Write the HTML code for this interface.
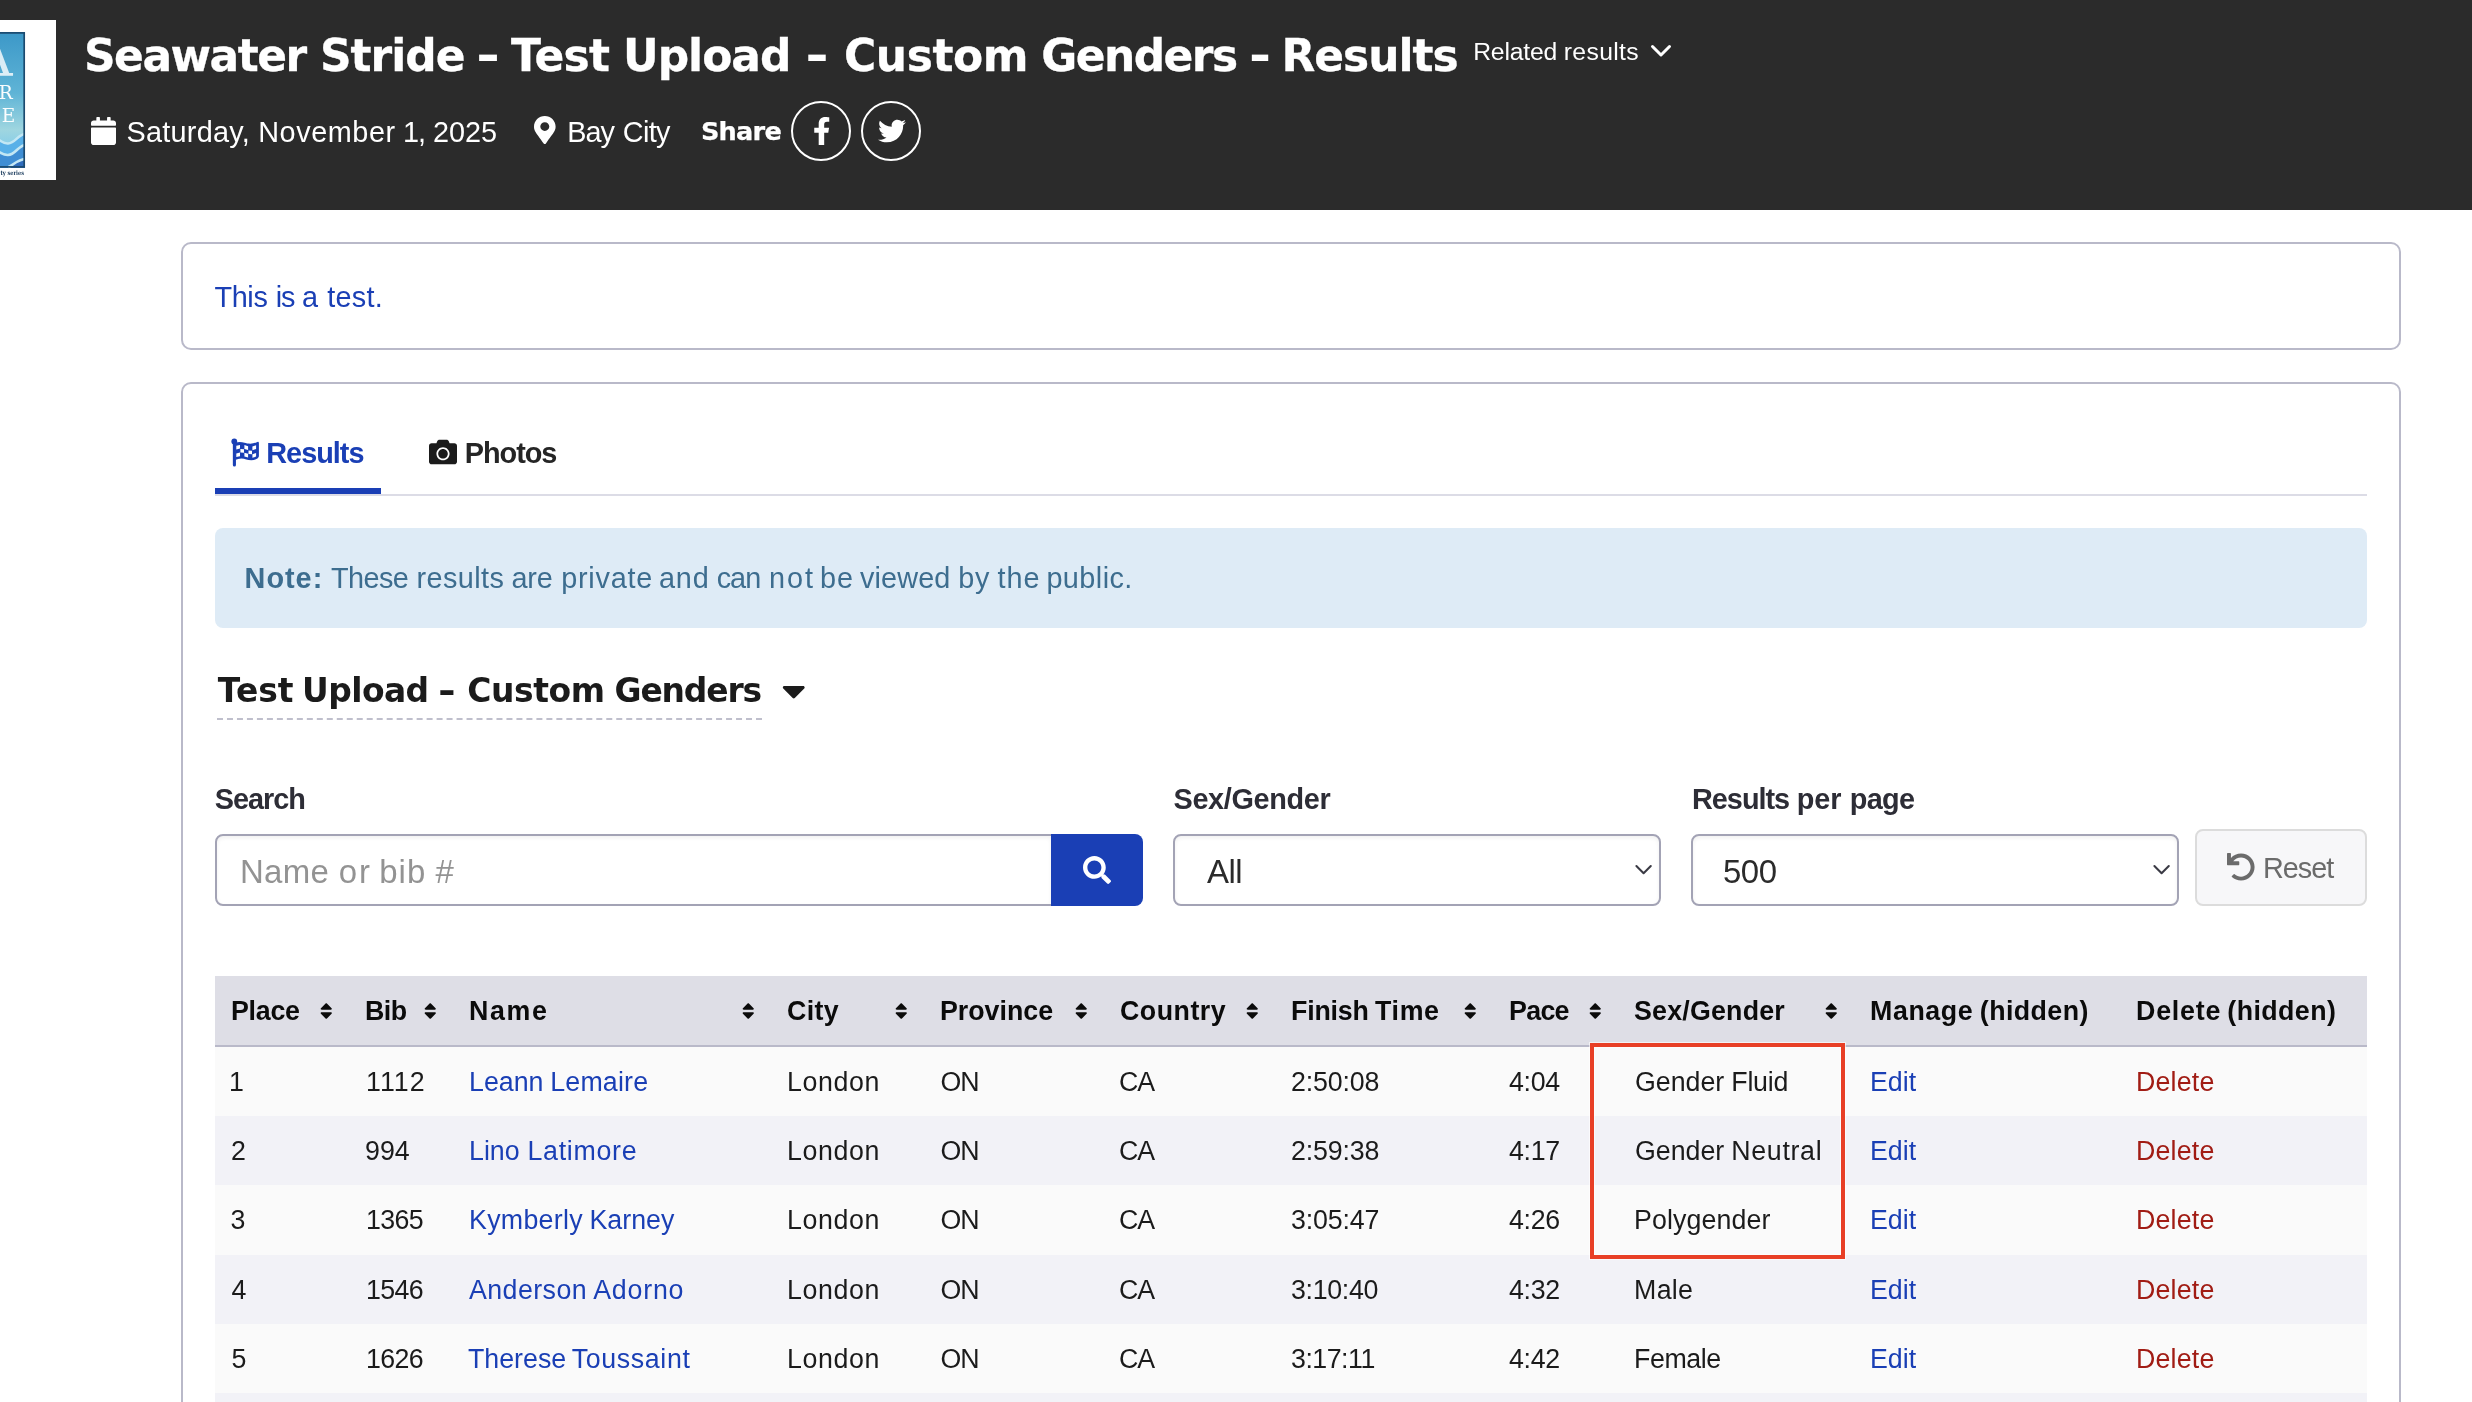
<!DOCTYPE html>
<html lang="en">
<head>
<meta charset="utf-8">
<title>Seawater Stride - Test Upload - Custom Genders - Results</title>
<style>
*{box-sizing:border-box;margin:0;padding:0}
html,body{width:2472px;height:1402px;overflow:hidden;background:#fff}
body{position:relative;font-family:"Liberation Sans",sans-serif;font-size:28px;line-height:1;color:#1b1b1b;will-change:transform}
.abs{position:absolute;white-space:nowrap;line-height:1}
.ws{font-family:"DejaVu Sans",sans-serif;font-weight:700}
.b{font-weight:700}
h1{font-size:inherit;font-weight:inherit}
.hd{position:absolute;left:0;top:0;width:2472px;height:210px;background:#2b2b2b}
.logo{position:absolute;left:0;top:20px;width:56px;height:160px;background:#fff;overflow:hidden}
.lgbg{position:absolute;left:0;top:12px;width:25px;height:136px;background:linear-gradient(180deg,#3c98c8 0%,#5fb4d6 45%,#9fd6e0 72%,#8fd0e6 80%)}
.circ{position:absolute;width:60px;height:60px;border:2px solid #fff;border-radius:50%}
.card{position:absolute;left:181px;width:2220px;border:2px solid #b9b9c9;border-radius:10px;background:#fff}
.alert{position:absolute;left:215px;top:528px;width:2152px;height:100px;background:#deebf6;border-radius:8px}
.inp{position:absolute;top:834px;height:72px;border:2px solid #a3a3b5;background:#fff;border-radius:8px;box-shadow:inset 0 2px 4px rgba(0,0,0,.06)}
.th{position:absolute;left:215px;top:976px;width:2152px;height:71px;background:#dedee6;border-bottom:2px solid #b9b9c9}
.tr{position:absolute;left:215px;width:2152px}
</style>
</head>
<body>
<div class="hd"></div>
<div class="logo"><div class="lgbg"></div><svg class="abs" style="left:0;top:0" width="27" height="160" viewBox="0 0 27 160"><path d="M-12 113C-6 113 0 124 8 123.5S18 113.5 27 113.5V148H-12Z" fill="#58b0e8"/><path d="M-12 126C-6 126 0 135.5 8 135S18 125 27 124.5V148H-12Z" fill="#3f8ed4"/><path d="M6 148C11 148 15 140 27 138.5V148Z" fill="#2f6dbd"/><path d="M-12 113C-6 113 0 124 8 123.5S18 113.5 27 113.5M-12 126C-6 126 0 135.5 8 135S18 125 27 124.5M8 147C12 147 15 140 27 138.5" fill="none" stroke="#c3e7f4" stroke-width="2.6"/><g fill="#fff" font-family="DejaVu Serif,Liberation Serif,serif" fill-opacity=".96"><text x="-7" y="56" font-size="54" text-anchor="middle" fill-opacity=".8">A</text><text x="-1.3" y="79.3" font-size="18.5">R</text><text x="1.7" y="102.4" font-size="18.5">E</text></g><rect x="25" y="0" width="3" height="160" fill="#fff"/><rect x="-5" y="12.9" width="29.2" height="134" fill="none" stroke="#1b4a6f" stroke-width="1.7"/><text x="0.5" y="154.8" font-size="6.2" font-weight="700" font-family="DejaVu Serif,Liberation Serif,serif" fill="#17385a" textLength="23.5" lengthAdjust="spacingAndGlyphs">ty series</text></svg></div>
<h1><span class="abs ws" style="left:84px;top:34px;font-size:43.92px;letter-spacing:-1.5px;color:#fff;-webkit-text-stroke:.3px #fff;">Seawater</span> <span class="abs ws" style="left:320px;top:34px;font-size:43.92px;letter-spacing:-1px;color:#fff;-webkit-text-stroke:.3px #fff;">Stride</span> <span class="abs ws" style="left:479.2px;top:34px;font-size:43.92px;color:#fff;transform:scaleX(1.32);">-</span> <span class="abs ws" style="left:511px;top:34px;font-size:43.92px;letter-spacing:-0.67px;color:#fff;-webkit-text-stroke:.3px #fff;">Test</span> <span class="abs ws" style="left:623px;top:34px;font-size:43.92px;letter-spacing:-1px;color:#fff;-webkit-text-stroke:.3px #fff;">Upload</span> <span class="abs ws" style="left:808px;top:34px;font-size:43.92px;color:#fff;transform:scaleX(1.29);">-</span> <span class="abs ws" style="left:844px;top:34px;font-size:43.92px;letter-spacing:-0.4px;color:#fff;-webkit-text-stroke:.3px #fff;">Custom</span> <span class="abs ws" style="left:1041.3px;top:34px;font-size:43.92px;letter-spacing:-1.55px;color:#fff;-webkit-text-stroke:.3px #fff;">Genders</span> <span class="abs ws" style="left:1251px;top:34px;font-size:43.92px;color:#fff;transform:scaleX(1.21);">-</span> <span class="abs ws" style="left:1281.5px;top:34px;font-size:43.92px;letter-spacing:-1px;color:#fff;-webkit-text-stroke:.3px #fff;">Results</span></h1>
<div class="abs" style="left:0;top:40px;font-size:24.72px;color:#fff;"><span class="abs" style="left:1473.2px;letter-spacing:-0.17px">Related </span><span class="abs" style="left:1563.8px;letter-spacing:0.33px">results</span></div>
<svg class="abs" style="left:1649px;top:42px" width="24" height="20" viewBox="0 0 24 20"><path d="M3.5 4.5L12 13l8.5-8.5" fill="none" stroke="#fff" stroke-width="3" stroke-linecap="round" stroke-linejoin="round"/></svg>
<svg class="abs" style="left:91px;top:116.6px" width="25" height="28" viewBox="0 0 448 512" preserveAspectRatio="none" ><path fill="#fff" d="M12 192h424c6.6 0 12 5.4 12 12v260c0 26.5-21.5 48-48 48H48c-26.5 0-48-21.5-48-48V204c0-6.6 5.4-12 12-12zm436-44v-36c0-26.5-21.5-48-48-48h-48V12c0-6.6-5.4-12-12-12h-40c-6.6 0-12 5.4-12 12v52H160V12c0-6.6-5.4-12-12-12h-40c-6.6 0-12 5.4-12 12v52H48C21.5 64 0 85.5 0 112v36c0 6.6 5.4 12 12 12h424c6.6 0 12-5.4 12-12z"/></svg>
<div class="abs" style="left:0;top:118px;font-size:28.84px;color:#fff;"><span class="abs" style="left:126.5px;letter-spacing:0.25px">Saturday, </span><span class="abs" style="left:258.2px;letter-spacing:0.57px">November </span><span class="abs" style="left:402.9px;letter-spacing:-1px">1, </span><span class="abs" style="left:432.9px;letter-spacing:0px">2025</span></div>
<svg class="abs" style="left:534px;top:116.4px" width="21.6" height="28" viewBox="0 0 384 512" preserveAspectRatio="none" ><path fill="#fff" d="M172.268 501.67C26.97 291.031 0 269.413 0 192 0 85.961 85.961 0 192 0s192 85.961 192 192c0 77.413-26.97 99.031-172.268 309.67-9.535 13.774-29.93 13.773-39.464 0zM192 272c44.183 0 80-35.817 80-80s-35.817-80-80-80-80 35.817-80 80 35.817 80 80 80z"/></svg>
<div class="abs" style="left:0;top:118px;font-size:28.84px;color:#fff;"><span class="abs" style="left:567.3px;letter-spacing:-1px">Bay </span><span class="abs" style="left:622.8px;letter-spacing:-0.67px">City</span></div>
<div class="abs ws" style="left:700.9px;top:119px;font-size:25.62px;letter-spacing:-0.75px;color:#fff;-webkit-text-stroke:.25px #fff;">Share</div>
<div class="circ" style="left:791px;top:100.5px"></div>
<svg class="abs" style="left:812.7px;top:116.5px" width="17.5" height="28" viewBox="0 0 320 512" preserveAspectRatio="none" ><path fill="#fff" d="M279.14 288l14.22-92.66h-88.91v-60.13c0-25.35 12.42-50.06 52.24-50.06h40.42V6.26S260.43 0 225.36 0c-73.22 0-121.08 44.38-121.08 124.72v70.62H22.89V288h81.39v224h100.17V288z"/></svg>
<div class="circ" style="left:861px;top:100.5px"></div>
<svg class="abs" style="left:877.5px;top:116.5px" width="28" height="28" viewBox="0 0 512 512" preserveAspectRatio="none" ><path fill="#fff" d="M459.37 151.716c.325 4.548.325 9.097.325 13.645 0 138.72-105.583 298.558-298.558 298.558-59.452 0-114.68-17.219-161.137-47.106 8.447.974 16.568 1.299 25.34 1.299 49.055 0 94.213-16.568 130.274-44.832-46.132-.975-84.792-31.188-98.112-72.772 6.498.974 12.995 1.624 19.818 1.624 9.421 0 18.843-1.3 27.614-3.573-48.081-9.747-84.143-51.98-84.143-102.985v-1.299c13.969 7.797 30.214 12.67 47.431 13.319-28.264-18.843-46.781-51.005-46.781-87.391 0-19.492 5.197-37.36 14.294-52.954 51.655 63.675 129.3 105.258 216.365 109.807-1.624-7.797-2.599-15.918-2.599-24.04 0-57.828 46.782-104.934 104.934-104.934 30.213 0 57.502 12.67 76.67 33.137 23.715-4.548 46.456-13.32 66.599-25.34-7.798 24.366-24.366 44.833-46.132 57.827 21.117-2.273 41.584-8.122 60.426-16.243-14.292 20.791-32.161 39.308-52.628 54.253z"/></svg>
<div class="card" style="top:242px;height:108px"></div>
<div class="abs" style="left:0;top:283px;font-size:28.84px;color:#1a3fb5;"><span class="abs" style="left:214.4px;letter-spacing:-0.33px">This </span><span class="abs" style="left:275.7px;letter-spacing:-1px">is </span><span class="abs" style="left:301.9px;letter-spacing:0px">a </span><span class="abs" style="left:327.2px;letter-spacing:0.25px">test.</span></div>
<div class="card" style="top:382px;height:1100px"></div>
<svg class="abs" style="left:228px;top:434px" width="36" height="36" viewBox="0 0 36 36"><g fill="#1a3fb5"><circle cx="6.3" cy="7.4" r="2.9"/><rect x="4.85" y="7" width="3.1" height="25.6" rx="1.5"/><path d="M7.5 8.6C10.5 7.9 13.5 7.9 16.5 8.8S24.5 10.6 29.3 8Q30.9 7.4 30.9 9.2V22.3C30.9 24.3 27 26.3 23.3 26.3S17 24.4 13.3 24.4C11 24.4 9 25.2 7.5 25.8Z"/></g><path fill="#fff" d="M8.3 11.7L12 10.9V14.6L8.3 15.4ZM8.3 19.4L12 18.6V22.2L8.3 23ZM12.4 14.9L16 15.2V18.7L12.4 18.4ZM16.4 11.1L20.1 12.2V15.9L16.4 14.9ZM16.4 18.8L20.1 19.8V23.4L16.4 22.4ZM20.5 16.4L24 16.8V20.3L20.5 19.9ZM24.4 12.6L28.1 11.3V15L24.4 16.2ZM24.4 20.2L28.1 19V22.6L24.4 23.8Z"/></svg>
<div class="abs b" style="left:266.3px;top:439px;font-size:28.84px;letter-spacing:-1px;color:#1a3fb5;">Results</div>
<svg class="abs" style="left:429px;top:438px" width="28" height="28" viewBox="0 0 512 512" preserveAspectRatio="none" ><path fill="#1b1b1b" d="M512 144v288c0 26.5-21.5 48-48 48H48c-26.5 0-48-21.5-48-48V144c0-26.5 21.5-48 48-48h88l12.3-32.9c7-18.7 24.9-31.1 44.9-31.1h125.5c20 0 37.9 12.4 44.9 31.1L376 96h88c26.5 0 48 21.5 48 48zM376 288c0-66.2-53.8-120-120-120s-120 53.8-120 120 53.8 120 120 120 120-53.8 120-120zm-32 0c0 48.5-39.5 88-88 88s-88-39.5-88-88 39.5-88 88-88 88 39.5 88 88z"/></svg>
<div class="abs b" style="left:464.7px;top:439px;font-size:28.84px;letter-spacing:-1px;color:#252525;">Photos</div>
<div class="abs" style="left:215px;top:494px;width:2152px;height:2px;background:#dcdce6"></div>
<div class="abs" style="left:215px;top:488px;width:166px;height:6px;background:#1a3fb5"></div>
<div class="alert"></div>
<div class="abs b" style="left:244.6px;top:564px;font-size:28.84px;letter-spacing:1px;color:#3d6d8f;">Note:</div>
<div class="abs" style="left:0;top:564px;font-size:28.84px;color:#3d6d8f;"><span class="abs" style="left:331.1px;letter-spacing:-0.58px">These </span><span class="abs" style="left:416.4px;letter-spacing:0.44px">results </span><span class="abs" style="left:511.4px;letter-spacing:-0.08px">are </span><span class="abs" style="left:561.2px;letter-spacing:0.77px">private </span><span class="abs" style="left:658.9px;letter-spacing:0.9px">and </span><span class="abs" style="left:716.7px;letter-spacing:-1px">can </span><span class="abs" style="left:769px;letter-spacing:1.91px">not </span><span class="abs" style="left:820.1px;letter-spacing:0.88px">be </span><span class="abs" style="left:860px;letter-spacing:0.13px">viewed </span><span class="abs" style="left:958.2px;letter-spacing:0.88px">by </span><span class="abs" style="left:997.5px;letter-spacing:0.92px">the </span><span class="abs" style="left:1046.4px;letter-spacing:0.44px">public.</span></div>
<div class="abs ws" style="left:0;top:675px;font-size:32.94px;color:#1b1b1b;"><span class="abs" style="left:217.8px;letter-spacing:0px">Test </span><span class="abs" style="left:302.1px;letter-spacing:-0.6px">Upload </span><span class="abs" style="left:440.4px;transform:scaleX(1.3)">- </span><span class="abs" style="left:467.2px;letter-spacing:-0.4px">Custom </span><span class="abs" style="left:614.6px;letter-spacing:-1.17px">Genders</span></div>
<div class="abs" style="left:217px;top:718px;width:545px;height:0;border-top:2px dashed #bfbfcc"></div>
<svg class="abs" style="left:781.7px;top:671.9px" width="23.5" height="37.6" viewBox="0 0 320 512" preserveAspectRatio="none" ><path fill="#1b1b1b" d="M31.3 192h257.3c17.8 0 26.7 21.5 14.1 34.1L174.1 354.8c-7.8 7.8-20.5 7.8-28.3 0L17.2 226.1C4.6 213.5 13.5 192 31.3 192z"/></svg>
<div class="abs b" style="left:214.7px;top:785px;font-size:28.84px;letter-spacing:-1px;color:#2d2d36;">Search</div>
<div class="abs b" style="left:1173.5px;top:785px;font-size:28.84px;letter-spacing:-0.33px;color:#2d2d36;">Sex/Gender</div>
<div class="abs b" style="left:0;top:785px;font-size:28.84px;color:#2d2d36;"><span class="abs" style="left:1692px;letter-spacing:-1px">Results </span><span class="abs" style="left:1796.7px;letter-spacing:0px">per </span><span class="abs" style="left:1849.7px;letter-spacing:-0.67px">page</span></div>
<div class="inp" style="left:215px;width:838px;border-radius:8px 0 0 8px"></div>
<div class="abs" style="left:0;top:856px;font-size:32.96px;color:#939393;"><span class="abs" style="left:239.9px;letter-spacing:0.33px">Name </span><span class="abs" style="left:338.7px;letter-spacing:2px">or </span><span class="abs" style="left:379.3px;letter-spacing:1px">bib </span><span class="abs" style="left:435.4px;letter-spacing:0px">#</span></div>
<div class="abs" style="left:1051px;top:834px;width:92px;height:72px;background:#1a3fb5;border-radius:0 8px 8px 0"></div>
<svg class="abs" style="left:1082.7px;top:856.2px" width="28" height="28" viewBox="0 0 512 512" preserveAspectRatio="none" ><path fill="#fff" d="M505 442.7L405.3 343c-4.5-4.5-10.6-7-17-7H372c27.6-35.3 44-79.7 44-128C416 93.1 322.9 0 208 0S0 93.1 0 208s93.1 208 208 208c48.3 0 92.7-16.4 128-44v16.3c0 6.4 2.5 12.5 7 17l99.7 99.7c9.4 9.4 24.6 9.4 33.9 0l28.3-28.3c9.4-9.4 9.4-24.6.1-34zM208 336c-70.7 0-128-57.2-128-128 0-70.7 57.2-128 128-128 70.7 0 128 57.2 128 128 0 70.7-57.2 128-128 128z"/></svg>
<div class="inp" style="left:1173px;width:488px"></div>
<div class="abs" style="left:1207px;top:856px;font-size:32.96px;letter-spacing:-0.5px;color:#2b2b2b;">All</div>
<svg class="abs" style="left:1634.05px;top:860.4px" width="19.2" height="19.2" viewBox="0 0 16 16"><path d="M2 5l6 6 6-6" fill="none" stroke="#3a3a44" stroke-width="1.7" stroke-linecap="round" stroke-linejoin="round"/></svg>
<div class="inp" style="left:1691px;width:488px"></div>
<div class="abs" style="left:1723px;top:856px;font-size:32.96px;letter-spacing:-0.5px;color:#2b2b2b;">500</div>
<svg class="abs" style="left:2152.05px;top:860.4px" width="19.2" height="19.2" viewBox="0 0 16 16"><path d="M2 5l6 6 6-6" fill="none" stroke="#3a3a44" stroke-width="1.7" stroke-linecap="round" stroke-linejoin="round"/></svg>
<div class="abs" style="left:2195px;top:829px;width:172px;height:77px;border:2px solid #dcdcdc;background:#f7f7f9;border-radius:8px"></div>
<svg class="abs" style="left:2227px;top:853px" width="28" height="28" viewBox="0 0 512 512" preserveAspectRatio="none" ><path fill="#6b6b6b" d="M212.333 224.333H12c-6.627 0-12-5.373-12-12V12C0 5.373 5.373 0 12 0h48c6.627 0 12 5.373 12 12v78.112C117.773 39.279 184.26 7.47 258.175 8.007c136.906.994 246.448 111.623 246.157 248.532C504.041 393.258 393.12 504 256.333 504c-64.089 0-122.496-24.313-166.51-64.215-5.099-4.622-5.334-12.554-.467-17.42l33.967-33.967c4.474-4.474 11.662-4.717 16.401-.525C170.76 415.336 211.58 432 256.333 432c97.268 0 176-78.716 176-176 0-97.267-78.716-176-176-176-58.496 0-110.28 28.476-142.274 72.333h98.274c6.627 0 12 5.373 12 12v48c0 6.627-5.373 12-12 12z"/></svg>
<div class="abs" style="left:2263px;top:854px;font-size:28.84px;letter-spacing:-1px;color:#6b6b6b;">Reset</div>
<div class="th"></div>
<div class="abs b" style="left:231px;top:997.5px;font-size:26.78px;letter-spacing:-0.25px;color:#0b0b0b;">Place</div>
<svg class="abs" style="left:320.2px;top:1001.2px" width="12.5" height="20" viewBox="0 0 320 512" preserveAspectRatio="none" ><path fill="#0b0b0b" d="M41 288h238c21.4 0 32.1 25.9 17 41L177 448c-9.4 9.4-24.6 9.4-33.9 0L24 329c-15.1-15.1-4.4-41 17-41zm255-105L177 64c-9.4-9.4-24.6-9.4-33.9 0L24 183c-15.1 15.1-4.4 41 17 41h238c21.4 0 32.1-25.9 17-41z"/></svg>
<div class="abs b" style="left:365px;top:997.5px;font-size:26.78px;letter-spacing:-0.5px;color:#0b0b0b;">Bib</div>
<svg class="abs" style="left:424.2px;top:1001.2px" width="12.5" height="20" viewBox="0 0 320 512" preserveAspectRatio="none" ><path fill="#0b0b0b" d="M41 288h238c21.4 0 32.1 25.9 17 41L177 448c-9.4 9.4-24.6 9.4-33.9 0L24 329c-15.1-15.1-4.4-41 17-41zm255-105L177 64c-9.4-9.4-24.6-9.4-33.9 0L24 183c-15.1 15.1-4.4 41 17 41h238c21.4 0 32.1-25.9 17-41z"/></svg>
<div class="abs b" style="left:469px;top:997.5px;font-size:26.78px;letter-spacing:1.67px;color:#0b0b0b;">Name</div>
<svg class="abs" style="left:742.2px;top:1001.2px" width="12.5" height="20" viewBox="0 0 320 512" preserveAspectRatio="none" ><path fill="#0b0b0b" d="M41 288h238c21.4 0 32.1 25.9 17 41L177 448c-9.4 9.4-24.6 9.4-33.9 0L24 329c-15.1-15.1-4.4-41 17-41zm255-105L177 64c-9.4-9.4-24.6-9.4-33.9 0L24 183c-15.1 15.1-4.4 41 17 41h238c21.4 0 32.1-25.9 17-41z"/></svg>
<div class="abs b" style="left:787px;top:997.5px;font-size:26.78px;letter-spacing:0.33px;color:#0b0b0b;">City</div>
<svg class="abs" style="left:895.2px;top:1001.2px" width="12.5" height="20" viewBox="0 0 320 512" preserveAspectRatio="none" ><path fill="#0b0b0b" d="M41 288h238c21.4 0 32.1 25.9 17 41L177 448c-9.4 9.4-24.6 9.4-33.9 0L24 329c-15.1-15.1-4.4-41 17-41zm255-105L177 64c-9.4-9.4-24.6-9.4-33.9 0L24 183c-15.1 15.1-4.4 41 17 41h238c21.4 0 32.1-25.9 17-41z"/></svg>
<div class="abs b" style="left:940px;top:997.5px;font-size:26.78px;color:#0b0b0b;">Province</div>
<svg class="abs" style="left:1075.2px;top:1001.2px" width="12.5" height="20" viewBox="0 0 320 512" preserveAspectRatio="none" ><path fill="#0b0b0b" d="M41 288h238c21.4 0 32.1 25.9 17 41L177 448c-9.4 9.4-24.6 9.4-33.9 0L24 329c-15.1-15.1-4.4-41 17-41zm255-105L177 64c-9.4-9.4-24.6-9.4-33.9 0L24 183c-15.1 15.1-4.4 41 17 41h238c21.4 0 32.1-25.9 17-41z"/></svg>
<div class="abs b" style="left:1120px;top:997.5px;font-size:26.78px;letter-spacing:0.5px;color:#0b0b0b;">Country</div>
<svg class="abs" style="left:1246.2px;top:1001.2px" width="12.5" height="20" viewBox="0 0 320 512" preserveAspectRatio="none" ><path fill="#0b0b0b" d="M41 288h238c21.4 0 32.1 25.9 17 41L177 448c-9.4 9.4-24.6 9.4-33.9 0L24 329c-15.1-15.1-4.4-41 17-41zm255-105L177 64c-9.4-9.4-24.6-9.4-33.9 0L24 183c-15.1 15.1-4.4 41 17 41h238c21.4 0 32.1-25.9 17-41z"/></svg>
<div class="abs b" style="left:0;top:997.5px;font-size:26.78px;color:#0b0b0b;"><span class="abs" style="left:1291px;letter-spacing:-0.2px">Finish </span><span class="abs" style="left:1375px;letter-spacing:0.67px">Time</span></div>
<svg class="abs" style="left:1464.2px;top:1001.2px" width="12.5" height="20" viewBox="0 0 320 512" preserveAspectRatio="none" ><path fill="#0b0b0b" d="M41 288h238c21.4 0 32.1 25.9 17 41L177 448c-9.4 9.4-24.6 9.4-33.9 0L24 329c-15.1-15.1-4.4-41 17-41zm255-105L177 64c-9.4-9.4-24.6-9.4-33.9 0L24 183c-15.1 15.1-4.4 41 17 41h238c21.4 0 32.1-25.9 17-41z"/></svg>
<div class="abs b" style="left:1509px;top:997.5px;font-size:26.78px;letter-spacing:-0.67px;color:#0b0b0b;">Pace</div>
<svg class="abs" style="left:1589.2px;top:1001.2px" width="12.5" height="20" viewBox="0 0 320 512" preserveAspectRatio="none" ><path fill="#0b0b0b" d="M41 288h238c21.4 0 32.1 25.9 17 41L177 448c-9.4 9.4-24.6 9.4-33.9 0L24 329c-15.1-15.1-4.4-41 17-41zm255-105L177 64c-9.4-9.4-24.6-9.4-33.9 0L24 183c-15.1 15.1-4.4 41 17 41h238c21.4 0 32.1-25.9 17-41z"/></svg>
<div class="abs b" style="left:1634px;top:997.5px;font-size:26.78px;letter-spacing:0.22px;color:#0b0b0b;">Sex/Gender</div>
<svg class="abs" style="left:1825.2px;top:1001.2px" width="12.5" height="20" viewBox="0 0 320 512" preserveAspectRatio="none" ><path fill="#0b0b0b" d="M41 288h238c21.4 0 32.1 25.9 17 41L177 448c-9.4 9.4-24.6 9.4-33.9 0L24 329c-15.1-15.1-4.4-41 17-41zm255-105L177 64c-9.4-9.4-24.6-9.4-33.9 0L24 183c-15.1 15.1-4.4 41 17 41h238c21.4 0 32.1-25.9 17-41z"/></svg>
<div class="abs b" style="left:0;top:997.5px;font-size:26.78px;color:#0b0b0b;"><span class="abs" style="left:1870px;letter-spacing:0.6px">Manage </span><span class="abs" style="left:1979.8px;letter-spacing:0.43px">(hidden)</span></div>
<div class="abs b" style="left:0;top:997.5px;font-size:26.78px;color:#0b0b0b;"><span class="abs" style="left:2136px;letter-spacing:0.8px">Delete </span><span class="abs" style="left:2227.3px;letter-spacing:0.43px">(hidden)</span></div>
<div class="tr" style="top:1047px;height:69px;background:#fafafa"></div>
<div class="abs" style="left:229px;top:1069px;font-size:26.78px;color:#1b1b1b;">1</div>
<div class="abs" style="left:366px;top:1069px;font-size:26.78px;letter-spacing:1px;color:#1b1b1b;">1112</div>
<div class="abs" style="left:0;top:1069px;font-size:26.78px;color:#1a3fb5;"><span class="abs" style="left:469px;letter-spacing:0px">Leann </span><span class="abs" style="left:550.3px;letter-spacing:0.17px">Lemaire</span></div>
<div class="abs" style="left:787px;top:1069px;font-size:26.78px;letter-spacing:0.6px;color:#1b1b1b;">London</div>
<div class="abs" style="left:940.5px;top:1069px;font-size:26.78px;letter-spacing:-1px;color:#1b1b1b;">ON</div>
<div class="abs" style="left:1119px;top:1069px;font-size:26.78px;letter-spacing:-1px;color:#1b1b1b;">CA</div>
<div class="abs" style="left:1291px;top:1069px;font-size:26.78px;letter-spacing:-0.17px;color:#1b1b1b;">2:50:08</div>
<div class="abs" style="left:1509px;top:1069px;font-size:26.78px;letter-spacing:-0.33px;color:#1b1b1b;">4:04</div>
<div class="abs" style="left:0;top:1069px;font-size:26.78px;color:#1b1b1b;"><span class="abs" style="left:1635px;letter-spacing:0px">Gender </span><span class="abs" style="left:1731.3px;letter-spacing:-0.25px">Fluid</span></div>
<div class="abs" style="left:1870px;top:1069px;font-size:26.78px;color:#1a3fb5;">Edit</div>
<div class="abs" style="left:2136px;top:1069px;font-size:26.78px;letter-spacing:0.2px;color:#a11c14;">Delete</div>
<div class="tr" style="top:1116px;height:69px;background:#f2f2f7"></div>
<div class="abs" style="left:231px;top:1138px;font-size:26.78px;color:#1b1b1b;">2</div>
<div class="abs" style="left:365px;top:1138px;font-size:26.78px;color:#1b1b1b;">994</div>
<div class="abs" style="left:0;top:1138px;font-size:26.78px;color:#1a3fb5;"><span class="abs" style="left:469px;letter-spacing:0px">Lino </span><span class="abs" style="left:527.5px;letter-spacing:0.71px">Latimore</span></div>
<div class="abs" style="left:787px;top:1138px;font-size:26.78px;letter-spacing:0.6px;color:#1b1b1b;">London</div>
<div class="abs" style="left:940.5px;top:1138px;font-size:26.78px;letter-spacing:-1px;color:#1b1b1b;">ON</div>
<div class="abs" style="left:1119px;top:1138px;font-size:26.78px;letter-spacing:-1px;color:#1b1b1b;">CA</div>
<div class="abs" style="left:1291px;top:1138px;font-size:26.78px;letter-spacing:-0.17px;color:#1b1b1b;">2:59:38</div>
<div class="abs" style="left:1509px;top:1138px;font-size:26.78px;letter-spacing:-0.33px;color:#1b1b1b;">4:17</div>
<div class="abs" style="left:0;top:1138px;font-size:26.78px;color:#1b1b1b;"><span class="abs" style="left:1635px;letter-spacing:0px">Gender </span><span class="abs" style="left:1731.3px;letter-spacing:0.67px">Neutral</span></div>
<div class="abs" style="left:1870px;top:1138px;font-size:26.78px;color:#1a3fb5;">Edit</div>
<div class="abs" style="left:2136px;top:1138px;font-size:26.78px;letter-spacing:0.2px;color:#a11c14;">Delete</div>
<div class="tr" style="top:1185px;height:70px;background:#fafafa"></div>
<div class="abs" style="left:230.5px;top:1207px;font-size:26.78px;color:#1b1b1b;">3</div>
<div class="abs" style="left:366px;top:1207px;font-size:26.78px;letter-spacing:-0.67px;color:#1b1b1b;">1365</div>
<div class="abs" style="left:0;top:1207px;font-size:26.78px;color:#1a3fb5;"><span class="abs" style="left:469px;letter-spacing:0.29px">Kymberly </span><span class="abs" style="left:589.5px;letter-spacing:0px">Karney</span></div>
<div class="abs" style="left:787px;top:1207px;font-size:26.78px;letter-spacing:0.6px;color:#1b1b1b;">London</div>
<div class="abs" style="left:940.5px;top:1207px;font-size:26.78px;letter-spacing:-1px;color:#1b1b1b;">ON</div>
<div class="abs" style="left:1119px;top:1207px;font-size:26.78px;letter-spacing:-1px;color:#1b1b1b;">CA</div>
<div class="abs" style="left:1291px;top:1207px;font-size:26.78px;letter-spacing:-0.17px;color:#1b1b1b;">3:05:47</div>
<div class="abs" style="left:1509px;top:1207px;font-size:26.78px;letter-spacing:-0.33px;color:#1b1b1b;">4:26</div>
<div class="abs" style="left:1634px;top:1207px;font-size:26.78px;letter-spacing:0.11px;color:#1b1b1b;">Polygender</div>
<div class="abs" style="left:1870px;top:1207px;font-size:26.78px;color:#1a3fb5;">Edit</div>
<div class="abs" style="left:2136px;top:1207px;font-size:26.78px;letter-spacing:0.2px;color:#a11c14;">Delete</div>
<div class="tr" style="top:1255px;height:69px;background:#f2f2f7"></div>
<div class="abs" style="left:231.5px;top:1277px;font-size:26.78px;color:#1b1b1b;">4</div>
<div class="abs" style="left:366px;top:1277px;font-size:26.78px;letter-spacing:-0.67px;color:#1b1b1b;">1546</div>
<div class="abs" style="left:0;top:1277px;font-size:26.78px;color:#1a3fb5;"><span class="abs" style="left:469px;letter-spacing:0.43px">Anderson </span><span class="abs" style="left:593.2px;letter-spacing:0.8px">Adorno</span></div>
<div class="abs" style="left:787px;top:1277px;font-size:26.78px;letter-spacing:0.6px;color:#1b1b1b;">London</div>
<div class="abs" style="left:940.5px;top:1277px;font-size:26.78px;letter-spacing:-1px;color:#1b1b1b;">ON</div>
<div class="abs" style="left:1119px;top:1277px;font-size:26.78px;letter-spacing:-1px;color:#1b1b1b;">CA</div>
<div class="abs" style="left:1291px;top:1277px;font-size:26.78px;letter-spacing:-0.33px;color:#1b1b1b;">3:10:40</div>
<div class="abs" style="left:1509px;top:1277px;font-size:26.78px;letter-spacing:-0.33px;color:#1b1b1b;">4:32</div>
<div class="abs" style="left:1634px;top:1277px;font-size:26.78px;letter-spacing:0.33px;color:#1b1b1b;">Male</div>
<div class="abs" style="left:1870px;top:1277px;font-size:26.78px;color:#1a3fb5;">Edit</div>
<div class="abs" style="left:2136px;top:1277px;font-size:26.78px;letter-spacing:0.2px;color:#a11c14;">Delete</div>
<div class="tr" style="top:1324px;height:69px;background:#fafafa"></div>
<div class="abs" style="left:231.5px;top:1346px;font-size:26.78px;color:#1b1b1b;">5</div>
<div class="abs" style="left:366px;top:1346px;font-size:26.78px;letter-spacing:-0.67px;color:#1b1b1b;">1626</div>
<div class="abs" style="left:0;top:1346px;font-size:26.78px;color:#1a3fb5;"><span class="abs" style="left:468px;letter-spacing:0px">Therese </span><span class="abs" style="left:571.8px;letter-spacing:0.62px">Toussaint</span></div>
<div class="abs" style="left:787px;top:1346px;font-size:26.78px;letter-spacing:0.6px;color:#1b1b1b;">London</div>
<div class="abs" style="left:940.5px;top:1346px;font-size:26.78px;letter-spacing:-1px;color:#1b1b1b;">ON</div>
<div class="abs" style="left:1119px;top:1346px;font-size:26.78px;letter-spacing:-1px;color:#1b1b1b;">CA</div>
<div class="abs" style="left:1291px;top:1346px;font-size:26.78px;letter-spacing:-0.5px;color:#1b1b1b;">3:17:11</div>
<div class="abs" style="left:1509px;top:1346px;font-size:26.78px;letter-spacing:-0.33px;color:#1b1b1b;">4:42</div>
<div class="abs" style="left:1634px;top:1346px;font-size:26.78px;letter-spacing:-0.4px;color:#1b1b1b;">Female</div>
<div class="abs" style="left:1870px;top:1346px;font-size:26.78px;color:#1a3fb5;">Edit</div>
<div class="abs" style="left:2136px;top:1346px;font-size:26.78px;letter-spacing:0.2px;color:#a11c14;">Delete</div>
<div class="tr" style="top:1393px;height:20px;background:#f2f2f7"></div>
<div class="abs" style="left:1590px;top:1043px;width:255px;height:216px;border:4px solid #e83f26;box-shadow:0 0 0 1px rgba(255,255,255,.6),inset 0 0 0 1px rgba(255,255,255,.6)"></div>
</body>
</html>
